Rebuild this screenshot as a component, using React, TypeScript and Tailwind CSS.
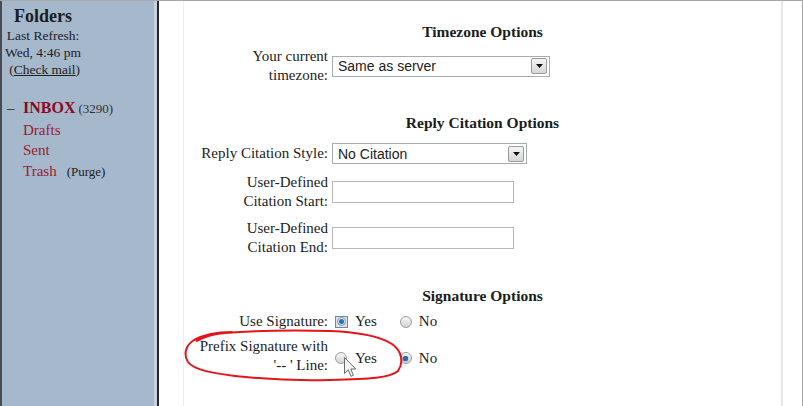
import React from "react";

function Select({ value, width }: { value: string; width: string }) {
  return (
    <div
      className={`${width} h-[21px] border border-[#a7abb2] bg-white flex items-center justify-between pl-[5px] pr-[2px] font-['Liberation_Sans',Arial,sans-serif] text-[14px] leading-[16px] text-[#222]`}
    >
      <span>{value}</span>
      <span className="w-[16px] h-[16px] border border-[#9a9a9a] rounded-[2px] bg-gradient-to-b from-[#f6f6f6] to-[#d6d6d6] flex items-center justify-center">
        <svg width="7" height="4" viewBox="0 0 7 4">
          <path d="M0 0 L7 0 L3.5 4 Z" fill="#111" />
        </svg>
      </span>
    </div>
  );
}

function TextBox() {
  return <div className="w-[182px] h-[22px] border border-[#b4b8be] bg-white" />;
}

function Radio({ checked, focused }: { checked?: boolean; focused?: boolean }) {
  if (focused) {
    return (
      <span className="w-[13px] h-[12px] border border-[#6f86a3] bg-[#d9e3ee] flex items-center justify-center">
        <span className="w-[9px] h-[9px] rounded-full bg-gradient-to-b from-[#f2f2f2] to-[#cfcfcf] border border-[#8f9aa6] flex items-center justify-center">
          <span className="w-[5px] h-[5px] rounded-full bg-[#1f74c0]" />
        </span>
      </span>
    );
  }
  return (
    <span className="w-[12px] h-[12px] rounded-full border border-[#9a9c9e] bg-gradient-to-b from-[#f7f7f7] to-[#d4d4d4] flex items-center justify-center">
      {checked && <span className="w-[5px] h-[5px] rounded-full bg-[#1d6fb8] shadow-[0_0_1px_#0a3a66]" />}
    </span>
  );
}

function RadioPair({ yes }: { yes: "focus" | "off" }) {
  return (
    <div className="flex items-center h-[19px]">
      <span className="w-[14px] flex justify-center">
        {yes === "focus" ? <Radio checked focused /> : <Radio />}
      </span>
      <span className="ml-[7px]">Yes</span>
      <span className="ml-[23px] w-[12px] flex justify-center">
        {yes === "focus" ? <Radio /> : <Radio checked />}
      </span>
      <span className="ml-[7px]">No</span>
    </div>
  );
}

export default function App() {
  return (
    <div className="w-[803px] h-[406px] overflow-hidden bg-white border-t border-[#a8a8a8] flex font-['Liberation_Serif','Times_New_Roman',serif] text-[#1c1c1c]">
      {/* Sidebar */}
      <div className="w-[157px] shrink-0 flex">
        <div className="w-[2px] bg-[#4a4a52]" />
        <div className="flex-1 bg-[#a5b8cc] flex flex-col">
          <div className="w-[82px] text-center pt-[5px]">
            <div className="text-[18px] leading-[20px] font-bold">Folders</div>
            <div className="mt-[1px] text-[13.5px] leading-[17px] text-[#222]">
              <div>Last Refresh:</div>
              <div>Wed, 4:46 pm</div>
              <div>
                &nbsp;(<span className="underline">Check mail</span>)
              </div>
            </div>
          </div>
          <div className="pl-[5px] mt-[20px] text-[15px] leading-[20.6px] text-[#9a1c2e]">
            <div className="flex items-baseline">
              <span className="w-[16px] text-[#222]">–</span>
              <span className="font-bold text-[16px] text-[#870a1f]">INBOX</span>
              <span className="ml-[3px] text-[13px] text-[#333]">(3290)</span>
            </div>
            <div className="flex items-baseline">
              <span className="w-[16px]" />
              <span>Drafts</span>
            </div>
            <div className="flex items-baseline">
              <span className="w-[16px]" />
              <span>Sent</span>
            </div>
            <div className="flex items-baseline">
              <span className="w-[16px]" />
              <span>Trash</span>
              <span className="ml-[10px] text-[13px] text-[#222]">(Purge)</span>
            </div>
          </div>
        </div>
        <div className="w-[3px] bg-[#c7d2de]" />
      </div>
      <div className="w-[2px] shrink-0 bg-[#262626]" />

      {/* Main */}
      <div className="flex-1 flex">
        <div className="w-[24px] shrink-0" />
        <div className="w-px shrink-0 bg-[#efefef]" />
        <div className="w-[597px] shrink-0 relative text-[15px] leading-[19px]">
          <div className="pt-[21px] flex flex-col">
            <div className="text-center font-bold text-[15.5px] leading-[19px]">Timezone Options</div>
            <div className="mt-[6px] flex items-center">
              <div className="w-[144px] text-right">
                Your current
                <br />
                timezone:
              </div>
              <div className="ml-[4px]">
                <Select value="Same as server" width="w-[218px]" />
              </div>
            </div>

            <div className="mt-[28px] text-center font-bold text-[15.5px] leading-[19px]">
              Reply Citation Options
            </div>
            <div className="mt-[11px] flex items-center">
              <div className="w-[144px] text-right whitespace-nowrap">Reply Citation Style:</div>
              <div className="ml-[4px]">
                <Select value="No Citation" width="w-[195px]" />
              </div>
            </div>
            <div className="mt-[9px] flex items-center">
              <div className="w-[144px] text-right">
                User-Defined
                <br />
                Citation Start:
              </div>
              <div className="ml-[4px]">
                <TextBox />
              </div>
            </div>
            <div className="mt-[8px] flex items-center">
              <div className="w-[144px] text-right">
                User-Defined
                <br />
                Citation End:
              </div>
              <div className="ml-[4px]">
                <TextBox />
              </div>
            </div>

            <div className="mt-[29px] text-center font-bold text-[15.5px] leading-[19px]">
              Signature Options
            </div>
            <div className="mt-[7px] flex items-center">
              <div className="w-[144px] text-right">Use Signature:</div>
              <div className="ml-[6px]">
                <RadioPair yes="focus" />
              </div>
            </div>
            <div className="mt-[6px] flex items-center">
              <div className="w-[144px] text-right">
                Prefix Signature with
                <br />
                &#39;-- &#39; Line:
              </div>
              <div className="ml-[6px] mt-[4px]">
                <RadioPair yes="off" />
              </div>
            </div>
          </div>

          {/* red hand-drawn loop */}
          <svg
            className="absolute left-0 top-0 pointer-events-none"
            width="597"
            height="405"
            viewBox="184 1 597 405"
          >
            <path
              d="M197 341 C205 336 214 334 225 333 C250 331 290 330 330 331 C355 332 378 335 392 344 C402 351 404 362 398 371 C390 378 370 379 330 380 C295 381 262 379 235 376 C212 373 194 370 188 362 C183 354 186 345 194 340 C205 334 220 332 232 332"
              fill="none"
              stroke="#e3151b"
              strokeWidth="2"
              strokeLinecap="round"
            />
          </svg>

          {/* mouse cursor */}
          <svg
            className="absolute left-[160px] top-[356px] pointer-events-none"
            width="13"
            height="21"
            viewBox="0 0 13 21"
          >
            <path
              d="M0.5 0.5 L0.5 16.5 L4.3 12.8 L7 19.3 L9.4 18.3 L6.8 12 L11.8 12 Z"
              fill="#f4f4f4"
              stroke="#6b6b6b"
              strokeWidth="1"
              strokeLinejoin="round"
            />
          </svg>
        </div>
        <div className="w-[2px] shrink-0 bg-[#e6e6e6]" />
        <div className="flex-1" />
        <div className="w-px shrink-0 bg-[#a3a3a3]" />
      </div>
    </div>
  );
}
